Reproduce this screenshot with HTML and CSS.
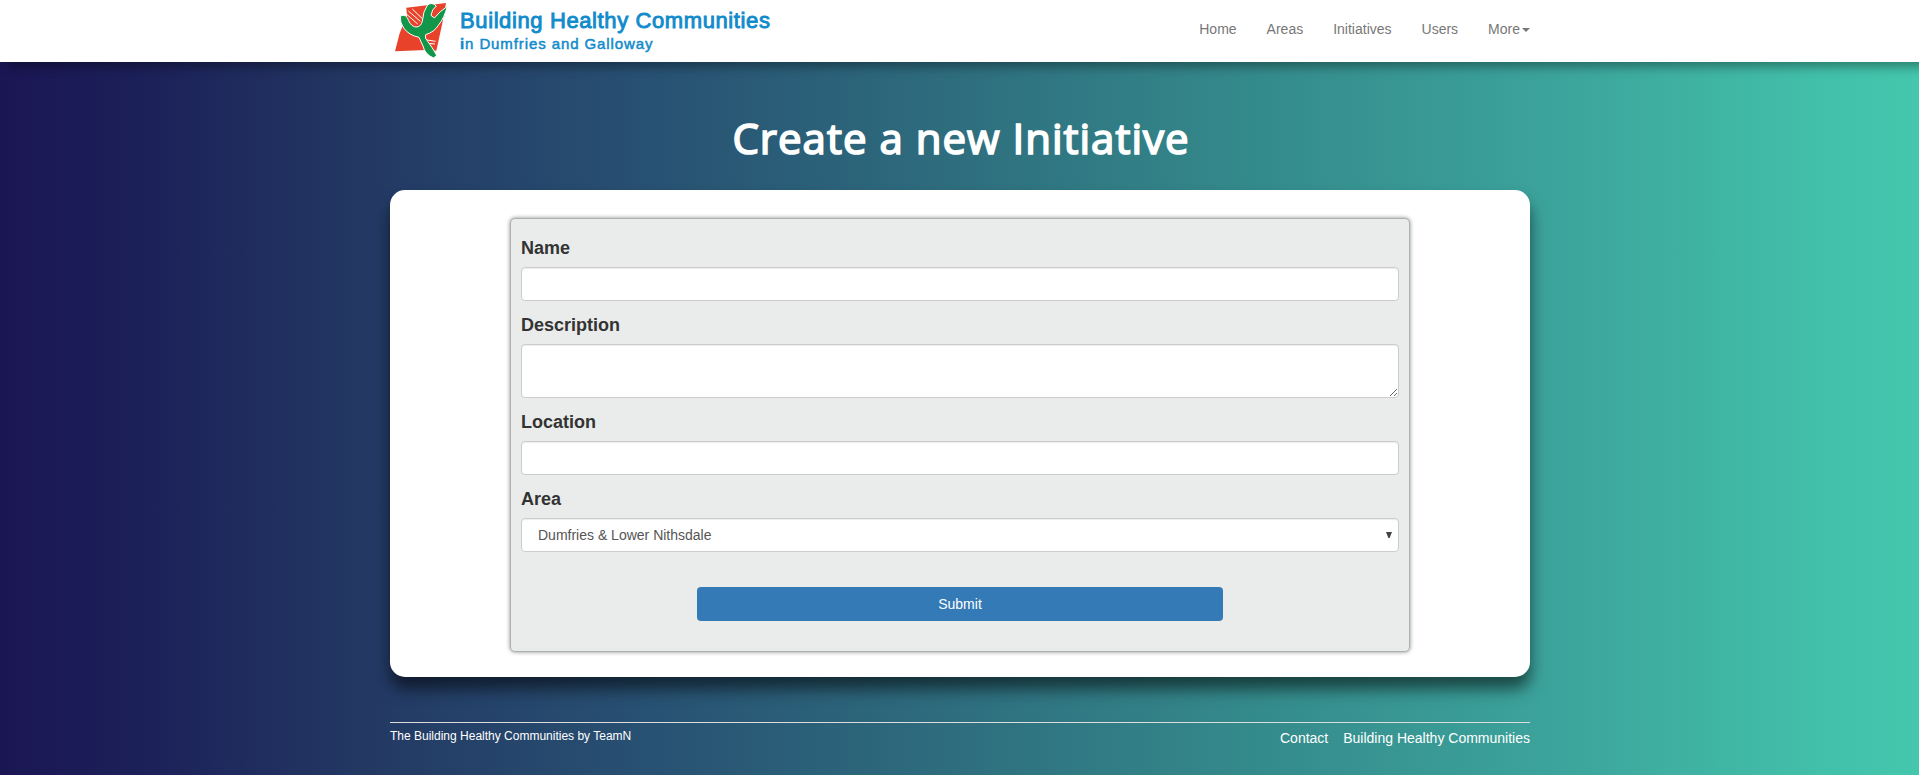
FILE: index.html
```html
<!DOCTYPE html>
<html lang="en">
<head>
<meta charset="utf-8">
<title>Create a new Initiative</title>
<link rel="stylesheet" href="styles.css">
</head>
<body>
<header class="navbar">
  <div class="container nav-inner">
    <a class="brand">
      <svg class="logo" viewBox="27 0 162 174" width="54" height="58" aria-hidden="true">
        <path fill="#e8432a" d="M64 23 L183 9 L172 70 L154 152 L124 150 L30 154 L44 100 L54 75 L66 48 Z"/>
        <path fill="none" stroke="#fff" stroke-width="3" d="M70 33 L106 64 M82 27 L112 56 M64 42 L98 72 M126 120 L152 124 M128 130 L150 132"/>
        <path fill="none" stroke="#8a5b2c" stroke-width="4" d="M162 42 L180 34 M164 52 L178 48"/>
        <path fill="#12964a" stroke="#fff" stroke-width="3" d="M46 48 Q64 40 71 62 Q80 82 96 81 Q108 79 112 64 Q114 34 127 16 Q140 4 154 18 Q140 28 138 46 L148 54 Q164 34 187 19 Q178 54 160 76 Q148 96 122 104 Q118 114 128 124 Q142 142 155 166 L146 174 Q120 164 114 138 L102 112 Q72 106 56 84 Q44 66 46 48Z"/>
      </svg>
      <span class="brand-text">
        <span class="brand-title">Building Healthy Communities</span>
        <span class="brand-sub"><b>i</b>n Dumfries and Galloway</span>
      </span>
    </a>
    <nav class="links"><a>Home</a><a>Areas</a><a>Initiatives</a><a>Users</a><a>More<i class="caret"></i></a></nav>
  </div>
</header>
<main class="container">
  <h1 class="title">Create a new Initiative</h1>
  <section class="card">
    <form class="form">
      <label class="label">Name</label>
      <input class="control" type="text">
      <label class="label">Description</label>
      <textarea class="control area"></textarea>
      <label class="label">Location</label>
      <input class="control" type="text">
      <label class="label">Area</label>
      <div class="control select"><span>Dumfries &amp; Lower Nithsdale</span><svg width="6" height="6" viewBox="0 0 6 6"><path fill="#444" d="M0 0h6L3.6 6H2.4z"/></svg></div>
      <button class="submit" type="button">Submit</button>
    </form>
  </section>
</main>
<footer class="container footer">
  <span class="credit">The Building Healthy Communities by TeamN</span>
  <div class="footer-links"><a>Contact</a><a>Building Healthy Communities</a></div>
</footer>
</body>
</html>
```
FILE: styles.css
```css
* { box-sizing: border-box; }
body {
  margin: 0;
  height: 775px;
  overflow: hidden;
  font: 14px/20px "Liberation Sans", Arial, sans-serif;
  color: #333;
  background: linear-gradient(to right, #1a1654 0, #1c2159 150px, #233964 370px, #285273 660px, #2e6d7e 950px, #348a8b 1250px, #3ca49c 1560px, #42c0a9 1820px, #44c7ad 1919px);
}
.container { width: 1140px; margin: 0 auto 0 390px; }
.navbar { height: 62px; background: #fff; box-shadow: 8px 5px 10px rgba(0,0,0,.35); }
.nav-inner { display: flex; justify-content: space-between; }
.brand { display: flex; padding-left: 4px; }
.brand-text { display: flex; flex-direction: column; padding: 9px 0 0 12px; color: #118bcb; white-space: nowrap; }
.brand-title { font-size: 22px; line-height: 24px; letter-spacing: .61px; -webkit-text-stroke: .9px #118bcb; }
.brand-sub { font-size: 15px; line-height: 22px; letter-spacing: .9px; -webkit-text-stroke: .5px #118bcb; }
.links { display: flex; gap: 30px; padding-top: 19px; color: #777; }
.caret { display: inline-block; margin-left: 2px; vertical-align: middle; border: 4px solid transparent; border-top-color: #777; border-bottom: 0; }
.title { margin: 37px 0 0; height: 91px; padding-left: 2px; font: 42px/77px "Open Sans", sans-serif; letter-spacing: 1px; color: #fff; text-align: center; -webkit-text-stroke: 1.7px #fff; }
.card { height: 487px; padding: 28px 120px 0; background: #fff; border-radius: 15px; box-shadow: 0 12px 16px rgba(0,0,0,.55); }
.form { display: flex; flex-direction: column; height: 434px; padding: 16px 10px 0; background: #eaeceb; border: 1px solid #aab2b0; border-radius: 5px; box-shadow: 0 0 4px rgba(0,0,0,.45); }
.label { font-size: 18px; line-height: 26px; font-weight: bold; margin-bottom: 6px; }
.control { flex: none; display: block; width: 100%; height: 34px; margin: 0 0 11px; padding: 6px 16px; border: 1px solid #ccc; border-radius: 4px; background: #fff; box-shadow: inset 0 1px 1px rgba(0,0,0,.075); color: #555; }
.area { height: 54px; }
.select { display: flex; align-items: center; justify-content: space-between; padding-right: 6px; }
.submit { width: 526px; height: 34px; margin: 24px auto 0; border: 0; border-radius: 4px; background: #337ab7; color: #fff; font: 14px/20px "Liberation Sans", Arial, sans-serif; }
.footer { display: flex; justify-content: space-between; margin-top: 45px; border-top: 1px solid #ddd; color: #fff; }
.credit { font-size: 12px; line-height: 17px; padding-top: 5px; }
.footer-links { display: flex; gap: 15px; padding-top: 5px; }
```
